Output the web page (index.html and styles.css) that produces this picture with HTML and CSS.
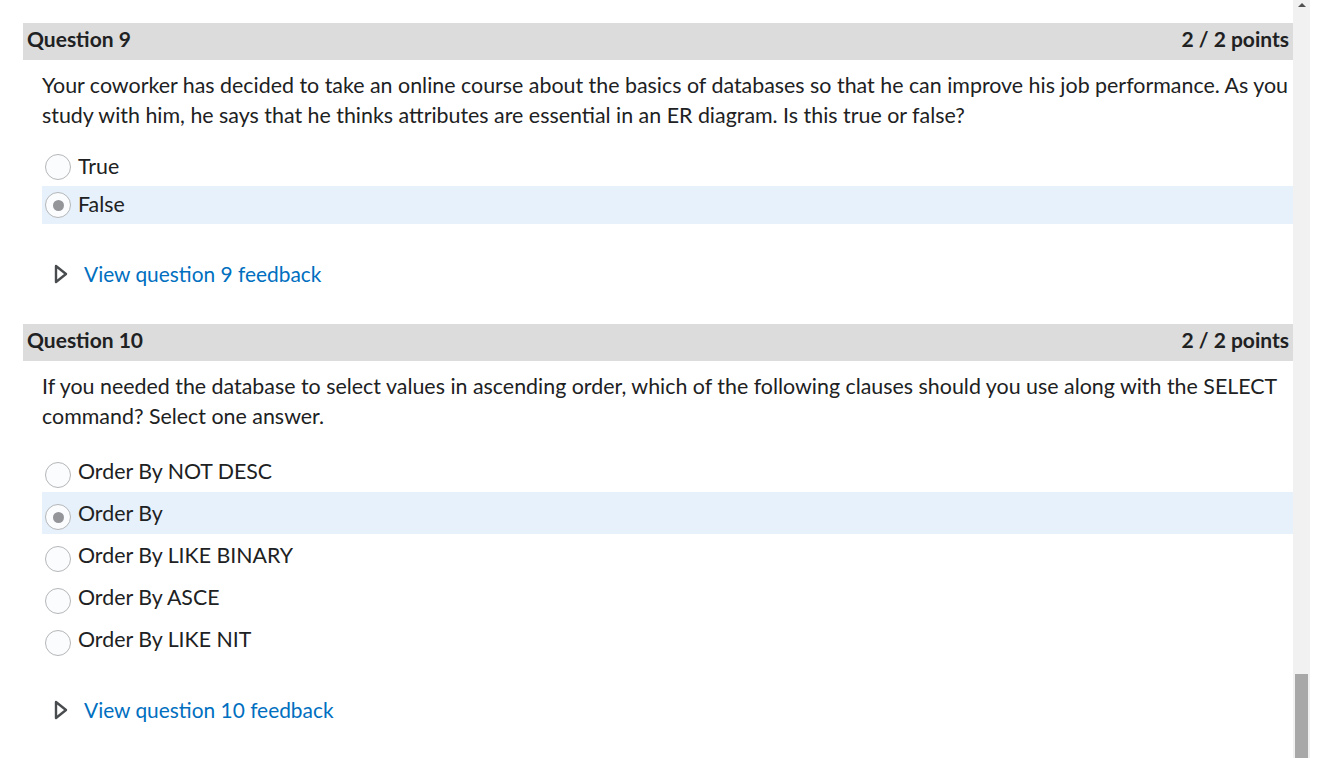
FILE: index.html
```html
<!DOCTYPE html>
<html lang="en">
<head>
<meta charset="utf-8">
<title>Quiz review</title>
<link rel="stylesheet" href="styles.css">
</head>
<body>
<div class="frame">
  <main class="content">
    <section class="question q9">
      <header class="q-head">
        <span class="q-title">Question 9</span>
        <span class="q-points">2 / 2 points</span>
      </header>
      <p class="q-text">Your coworker has decided to take an online course about the basics of databases so that he can improve his job performance. As you study with him, he says that he thinks attributes are essential in an ER diagram. Is this true or false?</p>
      <ul class="options">
        <li class="opt"><span class="radio"></span><span class="label">True</span></li>
        <li class="opt selected"><span class="radio checked"></span><span class="label">False</span></li>
      </ul>
      <div class="feedback">
        <svg class="tri" width="14" height="20" viewBox="0 0 14 20"><path d="M2 2 L12 10 L2 18 Z" fill="none" stroke="#494c4e" stroke-width="2.4" stroke-linejoin="round"/></svg>
        <a class="fb-link" href="#">View question 9 feedback</a>
      </div>
    </section>
    <section class="question q10">
      <header class="q-head">
        <span class="q-title">Question 10</span>
        <span class="q-points">2 / 2 points</span>
      </header>
      <p class="q-text">If you needed the database to select values in ascending order, which of the following clauses should you use along with the SELECT command? Select one answer.</p>
      <ul class="options tall">
        <li class="opt"><span class="radio"></span><span class="label">Order By NOT DESC</span></li>
        <li class="opt selected"><span class="radio checked"></span><span class="label">Order By</span></li>
        <li class="opt"><span class="radio"></span><span class="label">Order By LIKE BINARY</span></li>
        <li class="opt"><span class="radio"></span><span class="label">Order By ASCE</span></li>
        <li class="opt"><span class="radio"></span><span class="label">Order By LIKE NIT</span></li>
      </ul>
      <div class="feedback">
        <svg class="tri" width="14" height="20" viewBox="0 0 14 20"><path d="M2 2 L12 10 L2 18 Z" fill="none" stroke="#494c4e" stroke-width="2.4" stroke-linejoin="round"/></svg>
        <a class="fb-link" href="#">View question 10 feedback</a>
      </div>
    </section>
  </main>
  <div class="scrollbar">
    <span class="arrow-up"></span>
    <span class="thumb"></span>
  </div>
</div>
</body>
</html>
```
FILE: styles.css
```css
* { box-sizing: border-box; }
html, body { margin: 0; padding: 0; background: #fff; }
body {
  font-family: Lato, "Open Sans", sans-serif;
  color: #202122;
  height: 758px;
  overflow: hidden;
}
.frame {
  display: flex;
  height: 758px;
  padding-left: 23px;
  padding-right: 12px;
}
.content {
  flex: 1;
  min-width: 0;
  padding-top: 23px;
}
.q-head {
  display: flex;
  justify-content: space-between;
  align-items: center;
  height: 37px;
  background: #dcdcdc;
  padding: 0 4px 6px;
  font-weight: 700;
  font-size: 21px;
  color: #202122;
}
.q-text {
  margin: 10px 0 0 19px;
  font-size: 21.4px;
  line-height: 30px;
}
.options {
  list-style: none;
  margin: 18px 0 0 19px;
  padding: 0;
}
.opt {
  display: flex;
  align-items: center;
  height: 38px;
  padding-left: 3px;
  font-size: 21.33px;
}
.options.tall .opt { height: 42px; }
.options.tall .radio { margin-top: 8px; }
.options.tall .label { padding-bottom: 1px; }
.opt.selected { background: #e7f1fb; }
.radio {
  flex: none;
  width: 26px;
  height: 26px;
  border-radius: 50%;
  border: 1px solid #b4b6b8;
  background: #fbfcfe;
  display: flex;
  align-items: center;
  justify-content: center;
  margin-right: 7px;
}
.radio.checked::after {
  content: "";
  width: 11px;
  height: 11px;
  border-radius: 50%;
  background: #939599;
}
.label { line-height: 24px; padding-bottom: 3px; }
.feedback {
  display: flex;
  align-items: center;
  margin: 35px 0 0 31px;
  height: 30px;
}
.tri { margin-right: 16px; }
.fb-link {
  color: #006fbf;
  text-decoration: none;
  font-size: 20.9px;
  padding-bottom: 2px;
}
.q10 { margin-top: 35px; }
.q10 .options { margin-top: 19px; }
.scrollbar {
  flex: none;
  width: 17px;
  height: 758px;
  background: #f1f1f1;
  position: relative;
}
.arrow-up {
  position: absolute;
  top: 3px;
  left: 5px;
  width: 0;
  height: 0;
  border-left: 4px solid transparent;
  border-right: 4px solid transparent;
  border-bottom: 4px solid #505050;
}
.thumb {
  position: absolute;
  left: 2px;
  width: 13px;
  top: 674px;
  height: 84px;
  background: #a8a8a8;
}
```
